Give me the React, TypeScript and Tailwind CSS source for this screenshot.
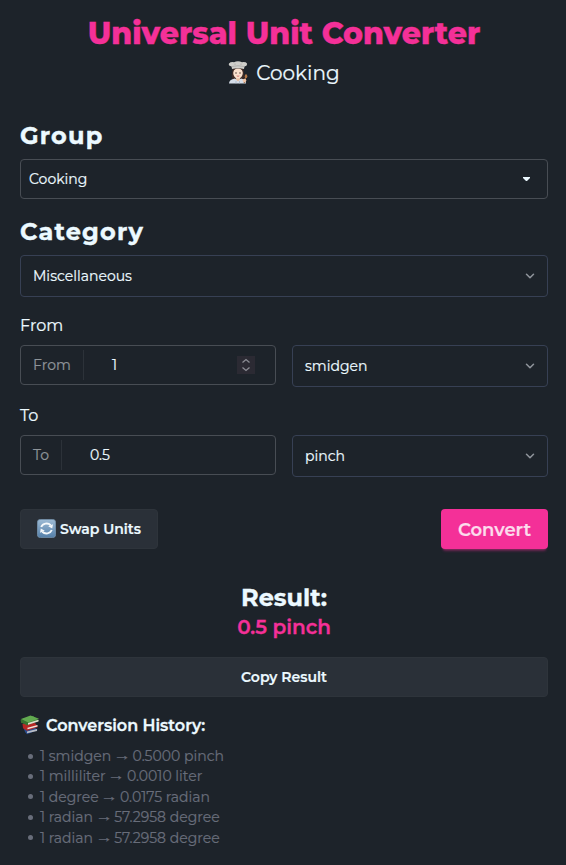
import type { ReactNode } from "react";
import { ChevronDown } from "lucide-react";

function ChefIcon() {
  return (
    <svg className="h-[24px] w-[20px] shrink-0" viewBox="0 0 20 24">
      <path d="M4.500 8 Q3 14 4.500 19 H15.500 Q17 14 15.500 8Z" fill="#3d2a25" />
      <path d="M1 22.500 Q1 18.500 7 17.500 L10 19.500 L13 17.500 Q18 18.500 18 22.500Z" fill="#d5dde8" />
      <path d="M8 16h4v2.500l-2 2l-2-2z" fill="#e8c0a4" />
      <ellipse cx="10" cy="12" rx="4.800" ry="5.500" fill="#fbe0cc" />
      <path d="M5 11 Q6 7.500 10 7.500 Q14 7.500 15 11 L14.500 7 H5.500Z" fill="#3d2a25" />
      <path d="M4 8 L3.500 5.500 Q0 5 1 2.500 Q2.500 .8 6 1.200 Q10-.5 14 1.200 Q18 .8 19 2.500 Q19.500 5 16.500 5.500 L16 8 Q10 6.500 4 8Z" fill="#cfceca" />
      <path d="M4 5.500 Q10 4 16 5.500M7 2.500v1.500M13 2.500v1.500" stroke="#a3a2a0" strokeWidth=".7" fill="none" />
      <circle cx="8" cy="12" r=".7" fill="#3d2a25" />
      <circle cx="12" cy="12" r=".7" fill="#3d2a25" />
      <path d="M8.700 14.900 Q10 15.700 11.300 14.900" stroke="#cc605b" strokeWidth=".8" fill="none" />
      <path d="M17.700 16 L16.200 22" stroke="#a56b3d" strokeWidth="1.200" />
      <ellipse cx="18" cy="15.300" rx="1.300" ry="2" fill="#b47646" />
      <circle cx="16.500" cy="19.500" r="1.800" fill="#f1c6a9" />
      <path d="M8 20v2.500M11.500 20v2.500" stroke="#a4b0c0" strokeWidth=".7" />
    </svg>
  );
}

function SwapIcon() {
  return (
    <svg className="mb-px h-[19px] w-[19px] shrink-0" viewBox="0 0 19 19">
      <defs>
        <linearGradient id="swapFill" x2="0" y2="1">
          <stop stopColor="#9dbbd5" />
          <stop offset="1" stopColor="#547fa9" />
        </linearGradient>
      </defs>
      <rect x=".4" y=".4" width="18.200" height="18.200" rx="3" fill="url(#swapFill)" stroke="#7694ae" strokeWidth=".8" />
      <path d="M4.200 8 A5.700 5.300 0 0 1 13.700 6.200M14.800 11 A5.700 5.300 0 0 1 5.300 12.800" fill="none" stroke="#f4f8fb" strokeWidth="1.900" />
      <path d="M16 5.200l-.8 4.300l-4-2.300zM3 13.800l.8-4.300l4 2.300z" fill="#f4f8fb" />
    </svg>
  );
}

function BooksIcon() {
  return (
    <svg className="mb-[2px] h-[20px] w-[20px] shrink-0" viewBox="0 0 20 20">
      <path d="M4 14 L14 12 L18 15 L7 19.300 L5 17Z" fill="#274c8d" />
      <path d="M7 16.500 L17 14 V16 L7 18.300Z" fill="#b9bcc4" />
      <path d="M2.500 9 L15 8 L18 12 L7 15.700 L3 13.300Z" fill="#b72825" />
      <path d="M7.500 12.800 L17.500 10 V11.500 L7.500 14.300Z" fill="#eee7df" />
      <path d="M1 4.500 L13 1 L19 5.500 L7 10 L1 7.500Z" fill="#43853a" />
      <path d="M1 4 L10.500.5 L19 3.800 L8 7.500Z" fill="#62aa50" />
      <path d="M8 8 L18.500 4.800 V6.500 L8 9.800Z" fill="#dfdfce" />
      <path d="M1 4 Q0 6 1.500 7.500 L8 10.400V7.500Z" fill="#387231" />
    </svg>
  );
}

function Select({ children }: { children: ReactNode }) {
  return (
    <div className="flex h-[42px] items-center justify-between rounded border border-[#374054] pr-[10px] pl-3 text-sm">
      <span className="[-webkit-text-stroke:0.2px]">{children}</span>
      <ChevronDown className="h-[14px] w-[14px] text-[#8f949b]" strokeWidth={2.6} />
    </div>
  );
}

const history = [
  ["1 smidgen", "0.5000 pinch"],
  ["1 milliliter", "0.0010 liter"],
  ["1 degree", "0.0175 radian"],
  ["1 radian", "57.2958 degree"],
  ["1 radian", "57.2958 degree"],
];

export default function App() {
  return (
    <main className="h-[865px] w-[566px] overflow-hidden bg-[#1d232a] pl-5 pr-[18px] font-['Montserrat','Inter',sans-serif] text-[#ecf9ff]">
      <h1 className="pt-[16px] text-center text-3xl leading-9 font-extrabold text-[#f43098] [-webkit-text-stroke:0.3px]">
        <span>Universal Unit Converter</span>
      </h1>
      <div className="mt-[7px] flex h-7 items-center justify-center gap-[8px] text-[20px] [-webkit-text-stroke:0.2px]">
        <ChefIcon />
        <span>Cooking</span>
      </div>

      <h2 className="mt-[33px] text-2xl leading-8 font-bold tracking-wider [-webkit-text-stroke:0.4px]"><span>Group</span></h2>
      <div className="mt-[7px] flex h-10 items-center justify-between rounded border border-[#484d54] pl-2 pr-[17px] text-sm">
        <span className="[-webkit-text-stroke:0.2px]">Cooking</span>
        <svg className="h-[4px] w-[7px]" viewBox="0 0 7 4"><path d="M0 0h7v1L4 4H3L0 1z" fill="#ecf9ff" /></svg>
      </div>

      <h2 className="mt-[17px] mb-[7px] text-2xl leading-8 font-bold tracking-wider [-webkit-text-stroke:0.4px]"><span>Category</span></h2>
      <Select>Miscellaneous</Select>

      <section className="mt-[17px] grid grid-cols-2 gap-x-4">
        <label className="col-span-2 mb-[7px] text-base leading-6 [-webkit-text-stroke:0.2px]"><span>From</span></label>
        <div className="flex h-10 items-center rounded border border-[#484d54] text-sm [-webkit-text-stroke:0.2px]">
          <span className="flex h-[30px] w-[63px] items-center border-r border-[#2c3239] pl-3 text-[#8e9499]">From</span>
          <span className="pl-[28px]">1</span>
          <span className="mr-[20px] ml-auto flex h-[18px] w-[18px] items-center justify-center bg-[#2b2a33]">
            <svg className="h-[14px] w-[10px]" viewBox="0 0 10 14" fill="none" stroke="#8c8d95" strokeWidth="1.300">
              <path d="M1.500 4.500 L5 1.500 L8.500 4.500M1.500 9.500 L5 12.500 L8.500 9.500" />
            </svg>
          </span>
        </div>
        <Select>smidgen</Select>
      </section>

      <section className="mt-[17px] grid grid-cols-2 gap-x-4">
        <label className="col-span-2 mb-[7px] text-base leading-6 [-webkit-text-stroke:0.2px]"><span>To</span></label>
        <div className="flex h-10 items-center rounded border border-[#484d54] text-sm [-webkit-text-stroke:0.2px]">
          <span className="flex h-[30px] w-[41px] items-center border-r border-[#2c3239] pl-3 text-[#8e9499]">To</span>
          <span className="pl-[28px]">0.5</span>
        </div>
        <Select>pinch</Select>
      </section>

      <div className="mt-8 flex justify-between [-webkit-text-stroke:0.2px]">
        <button className="flex h-10 w-[138px] items-center gap-[4px] rounded border border-[#2e343b] bg-[#2a3038] pl-4 text-sm font-semibold">
          <SwapIcon />
          <span>Swap Units</span>
        </button>
        <button className="h-10 w-[107px] rounded bg-[#f43098] pt-px text-lg font-semibold text-[#fcdcec] shadow-[0_3px_2px_-2px_#f430984d,0_4px_3px_-2px_#f430984d]">
          <span>Convert</span>
        </button>
      </div>

      <div className="mt-[33px] text-center [-webkit-text-stroke:0.3px]">
        <h2 className="text-2xl leading-8 font-bold"><span>Result:</span></h2>
        <p className="-mt-px text-xl leading-7 font-semibold text-[#f43098]"><span>0.5 pinch</span></p>
      </div>
      <button className="mt-4 h-10 w-full rounded border border-[#2e343b] bg-[#2a3038] text-sm font-semibold [-webkit-text-stroke:0.2px]">
        <span>Copy Result</span>
      </button>

      <h3 className="mt-[17px] flex h-6 items-center gap-[6px] text-base font-semibold [-webkit-text-stroke:0.3px]">
        <BooksIcon />
        <span>Conversion History:</span>
      </h3>
      <ul className="mt-[8px] text-sm leading-[20.4px] text-[#686d7a] [-webkit-text-stroke:0.2px]">
        {history.map(([from, to], i) => (
          <li key={i} className="flex h-[20.4px] items-center">
            <i className="mr-[7px] ml-[8px] h-[5px] w-[5px] rounded-full bg-[#686d7a]" />
            <span>
              {from} <span className="inline-block -translate-y-px scale-x-[1.22] font-['Liberation_Sans'] leading-none">→</span> {to}
            </span>
          </li>
        ))}
      </ul>
    </main>
  );
}
